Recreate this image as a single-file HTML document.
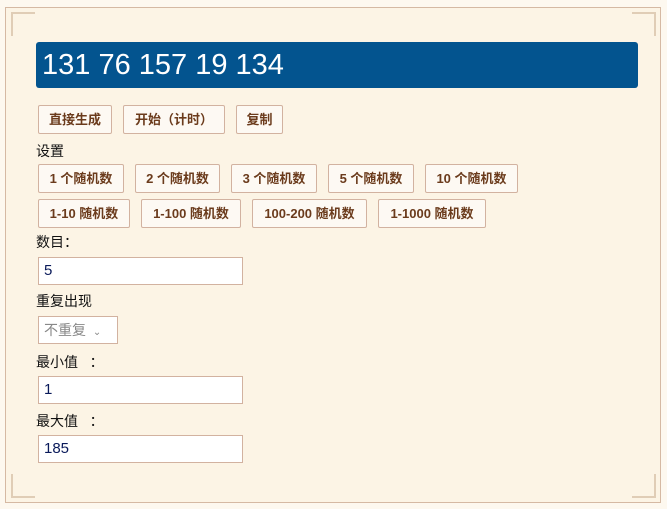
<!DOCTYPE html><html><head><meta charset="utf-8"><style>
body{margin:0;width:667px;height:509px;background:#fdf8ef;font-family:"Liberation Sans","Noto Sans CJK SC",sans-serif;position:relative;overflow:hidden}
.box{position:absolute;left:5px;top:7px;width:654px;height:494px;border:1px solid #d5b9a3;background:#fcf4e5}
.bar{position:absolute;left:36px;top:42px;width:602px;height:46px;background:#03548f;border-radius:3px;color:#fff;font-size:29px;line-height:46px;padding-left:6px;box-sizing:border-box}
.b{position:absolute;height:29px;border:1px solid #d2b2a0;background:#fdf9f3;box-sizing:border-box;font-size:13px;font-weight:bold;color:#6b3b1c;text-align:center;line-height:27px;border-radius:2px}
.l{position:absolute;left:36px;font-size:14px;color:#111}
.i{position:absolute;left:38px;width:205px;height:28px;border:1px solid #d2b2a0;background:#fff;box-sizing:border-box;font-size:15px;color:#0a1a5a;padding-left:5px;line-height:26px}
.c{position:absolute;width:22px;height:22px;border-color:#e0cdb6;border-style:solid;border-width:0}
</style></head><body>
<div class="box"></div>
<div class="c" style="left:11px;top:12px;border-top-width:2px;border-left-width:2px"></div>
<div class="c" style="right:11px;top:12px;border-top-width:2px;border-right-width:2px"></div>
<div class="c" style="left:11px;bottom:11px;border-bottom-width:2px;border-left-width:2px"></div>
<div class="c" style="right:11px;bottom:11px;border-bottom-width:2px;border-right-width:2px"></div>
<div class="bar">131 76 157 19 134</div>
<div class="b" style="left:38px;top:105px;width:74px">直接生成</div>
<div class="b" style="left:123px;top:105px;width:102px">开始（计时）</div>
<div class="b" style="left:236px;top:105px;width:47px">复制</div>
<div class="l" style="top:141px">设置</div>
<div class="b" style="left:38px;top:164px;width:86px">1 个随机数</div>
<div class="b" style="left:135px;top:164px;width:85px">2 个随机数</div>
<div class="b" style="left:231px;top:164px;width:86px">3 个随机数</div>
<div class="b" style="left:328px;top:164px;width:86px">5 个随机数</div>
<div class="b" style="left:425px;top:164px;width:93px">10 个随机数</div>
<div class="b" style="left:38px;top:199px;width:92px">1-10 随机数</div>
<div class="b" style="left:141px;top:199px;width:100px">1-100 随机数</div>
<div class="b" style="left:252px;top:199px;width:115px">100-200 随机数</div>
<div class="b" style="left:378px;top:199px;width:108px">1-1000 随机数</div>
<div class="l" style="top:232px">数目：</div>
<div class="i" style="top:257px">5</div>
<div class="l" style="top:291px">重复出现</div>
<div class="i" style="top:316px;width:80px;color:#888;font-size:14px">不重复 <span style="font-size:10px;margin-left:3px">&#8964;</span></div>
<div class="l" style="top:352px">最小值 &nbsp; ：</div>
<div class="i" style="top:376px">1</div>
<div class="l" style="top:411px">最大值 &nbsp; ：</div>
<div class="i" style="top:435px">185</div>
</body></html>
